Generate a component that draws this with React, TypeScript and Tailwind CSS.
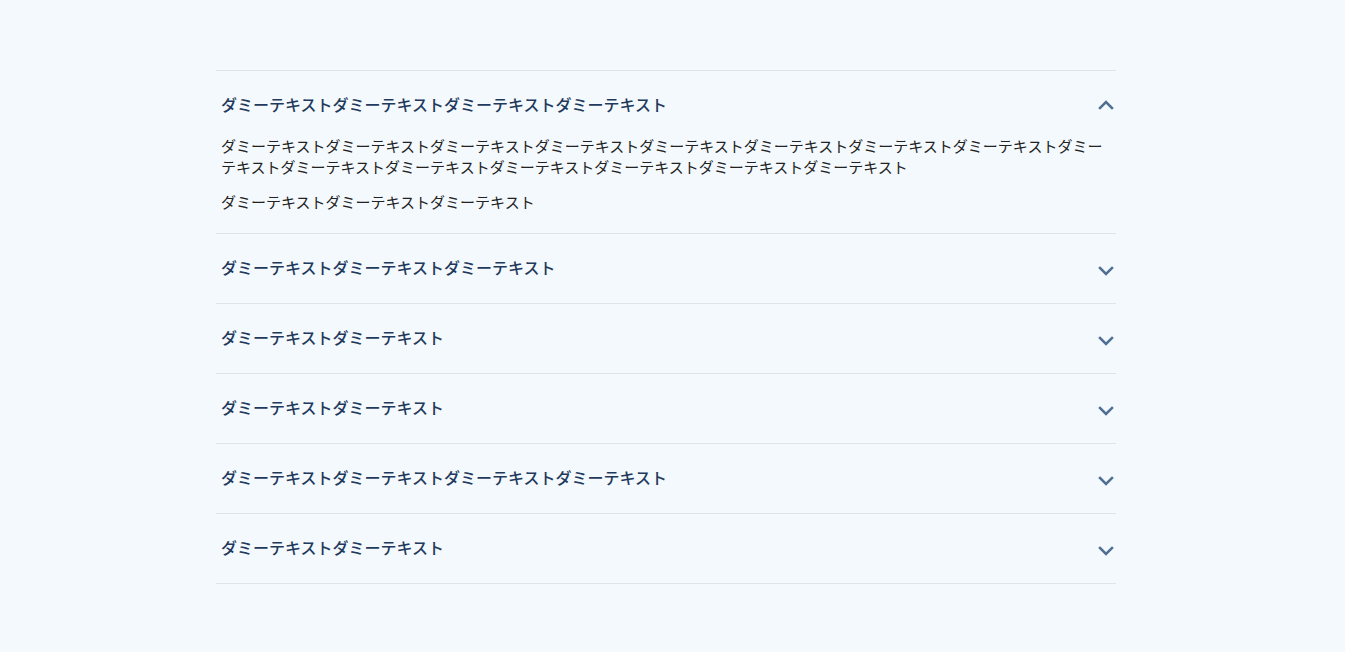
import { useState } from "react";

const faqs = [
  {
    q: "ダミーテキストダミーテキストダミーテキストダミーテキスト",
    a: [
      "ダミーテキスト".repeat(15),
      "ダミーテキストダミーテキストダミーテキスト",
    ],
  },
  {
    q: "ダミーテキストダミーテキストダミーテキスト",
    a: ["ダミーテキストダミーテキスト"],
  },
  { q: "ダミーテキストダミーテキスト", a: ["ダミーテキストダミーテキスト"] },
  { q: "ダミーテキストダミーテキスト", a: ["ダミーテキストダミーテキスト"] },
  {
    q: "ダミーテキストダミーテキストダミーテキストダミーテキスト",
    a: ["ダミーテキストダミーテキスト"],
  },
  { q: "ダミーテキストダミーテキスト", a: ["ダミーテキストダミーテキスト"] },
];

function Chevron({ open }: { open: boolean }) {
  return (
    <svg
      width="18"
      height="18"
      viewBox="0 0 18 18"
      fill="none"
      className={open ? "rotate-180" : ""}
    >
      <path
        d="M3 6 L9 12 L15 6"
        stroke="#4f6f94"
        strokeWidth="2.5"
        strokeLinecap="square"
      />
    </svg>
  );
}

export default function App() {
  const [open, setOpen] = useState<number | null>(0);

  return (
    <div
      className="min-h-[652px] bg-[#f4f9fd] pt-[70px]"
      style={{ fontFamily: '"Noto Sans CJK JP", "Noto Sans", sans-serif' }}
    >
      <div className="w-[1332px]">
        <div className="mx-auto w-[900px] border-t border-[#dfe4e8]">
          {faqs.map((item, index) => {
            const isOpen = open === index;
            return (
              <div key={index} className="border-b border-[#dfe4e8]">
                <button
                  type="button"
                  onClick={() => setOpen(isOpen ? null : index)}
                  className="flex h-[69px] w-full items-center justify-between px-[5px] pb-[4px] text-left"
                >
                  <span className="text-[16px] font-medium leading-[22px] text-[#1f3a5c]">
                    {item.q}
                  </span>
                  <span className={isOpen ? "mr-[-4px] mt-[2px]" : "mr-[-4px] mt-[8px]"}>
                    <Chevron open={isOpen} />
                  </span>
                </button>
                {isOpen && (
                  <div className="-mt-[5px] flex flex-col gap-[14px] px-[5px] pb-[21px]">
                    {item.a.map((p, i) => (
                      <p key={i} className="text-[15px] leading-[21px] text-[#222222]">
                        {p}
                      </p>
                    ))}
                  </div>
                )}
              </div>
            );
          })}
        </div>
      </div>
    </div>
  );
}
